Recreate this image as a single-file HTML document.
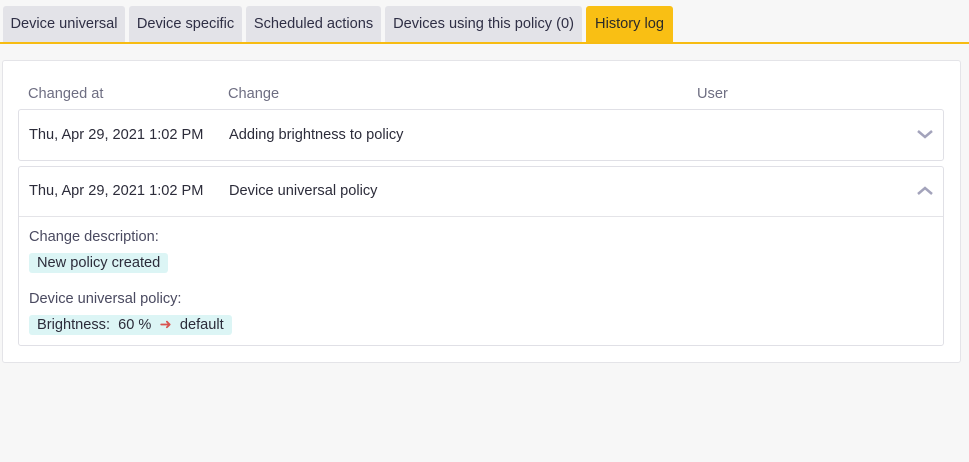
<!DOCTYPE html><html><head><style>
body{margin:0;width:969px;height:462px;background:#f7f7f7;font-family:"Liberation Sans",sans-serif;font-size:14.6px;color:#2c2c3a;position:relative;overflow:hidden}
.tab{position:absolute;top:6px;height:36px;line-height:37px;background:#e3e3e8;border-radius:3px 3px 0 0;text-align:center;color:#2f2f45;font-size:14.6px}
.line{position:absolute;top:42px;left:0;width:969px;height:2px;background:#f7bc12}
.panel{position:absolute;left:2px;top:60px;width:957px;height:301px;background:#fff;border:1px solid #e4e4e8;border-radius:3px}
.h{position:absolute;top:86px;color:#6e6e82}
.card{position:absolute;left:18px;width:924px;background:#fff;border:1px solid #e0e0e6;border-radius:3px}
.t{position:absolute}
.tag{position:absolute;background:#dcf5f5;border-radius:3px;padding:0 8px;height:20px;line-height:21px;left:29px}
.chev{position:absolute;left:916px}
</style></head><body>
<div class="tab" style="left:3px;width:122px">Device universal</div>
<div class="tab" style="left:129px;width:113px">Device specific</div>
<div class="tab" style="left:246px;width:135px">Scheduled actions</div>
<div class="tab" style="left:385px;width:197px">Devices using this policy (0)</div>
<div class="tab" style="left:586px;width:87px;background:#f9bf14;color:#2a2a2a">History log</div>
<div class="line"></div>
<div class="panel"></div>
<div class="h" style="left:28px">Changed at</div>
<div class="h" style="left:228px">Change</div>
<div class="h" style="left:697px">User</div>
<div class="card" style="top:109px;height:50px"></div>
<div class="t" style="left:29px;top:127px">Thu, Apr 29, 2021 1:02 PM</div>
<div class="t" style="left:229px;top:127px">Adding brightness to policy</div>
<svg class="chev" style="top:128px" width="18" height="12"><path d="M2 3l7 6 7-6" fill="none" stroke="#a3a3bb" stroke-width="2.5"/></svg>
<div class="card" style="top:166px;height:178px"></div>
<div style="position:absolute;left:19px;top:216px;width:924px;height:1px;background:#e4e4e8"></div>
<div class="t" style="left:29px;top:183px">Thu, Apr 29, 2021 1:02 PM</div>
<div class="t" style="left:229px;top:183px">Device universal policy</div>
<svg class="chev" style="top:184px" width="18" height="12"><path d="M2 10l7-6 7 6" fill="none" stroke="#a3a3bb" stroke-width="2.5"/></svg>
<div class="t" style="left:29px;top:229px;color:#4a4a60">Change description:</div>
<div class="tag" style="top:253px">New policy created</div>
<div class="t" style="left:29px;top:291px;color:#4a4a60">Device universal policy:</div>
<div class="tag" style="top:315px">Brightness:&nbsp; 60 %&nbsp; <span style="color:#d9534f">&#10140;</span>&nbsp; default</div>
</body></html>
